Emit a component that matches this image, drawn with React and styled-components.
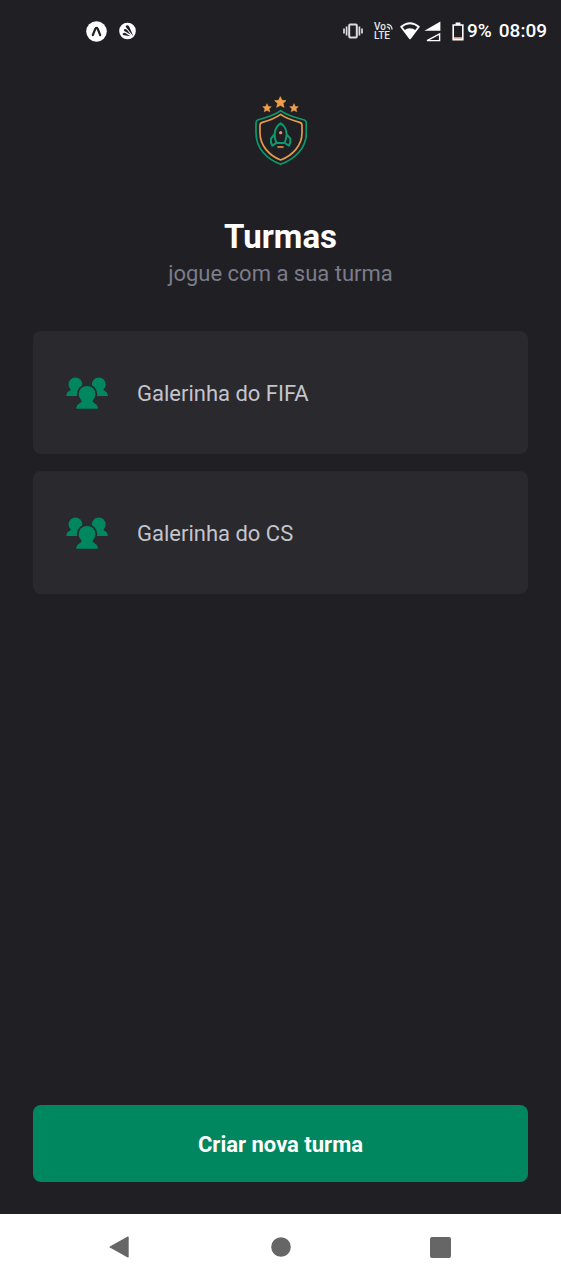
import React from "react";
import styled, { createGlobalStyle, ThemeProvider } from "styled-components";

const theme = {
  background: "#202024",
  card: "#29292e",
  green: "#00875f",
  greenLight: "#0a9b6c",
  orange: "#e59a4c",
  white: "#ffffff",
  text: "#c4c4cc",
  muted: "#7c7c8a",
  nav: "#666666",
};

const GlobalStyle = createGlobalStyle`
  *, *::before, *::after { box-sizing: border-box; }
  body { margin: 0; background: ${theme.background}; }
  button { font: inherit; border: 0; cursor: pointer; }
  svg { display: block; flex: none; }
`;

const Screen = styled.div`
  display: flex;
  flex-direction: column;
  min-height: 100vh;
  background: ${(p) => p.theme.background};
  color: ${(p) => p.theme.white};
  font-family: Roboto, "Liberation Sans", sans-serif;
`;

const StatusBar = styled.header`
  display: flex;
  align-items: center;
  justify-content: space-between;
  height: 62px;
  padding: 0 14px 0 86px;
`;

const StatusGroup = styled.div`
  display: flex;
  align-items: center;
  gap: ${(p) => p.$gap}px;
`;

const StatusText = styled.span`
  font-size: 19px;
  font-weight: 500;
  line-height: 24px;
  white-space: nowrap;
`;

const Content = styled.main`
  display: flex;
  flex: 1;
  flex-direction: column;
  padding: 34px 33px 32px;
`;

const LogoBox = styled.div`
  display: flex;
  justify-content: center;
  margin-bottom: 51px;
`;

const Heading = styled.div`
  text-align: center;
  margin-bottom: 40px;
`;

const Title = styled.h1`
  margin: 0;
  font-size: 33px;
  font-weight: 700;
  line-height: 40px;
`;

const Subtitle = styled.p`
  margin: 0;
  color: ${(p) => p.theme.muted};
  font-size: 22px;
  line-height: 34px;
`;

const GroupList = styled.ul`
  display: flex;
  flex: 1;
  flex-direction: column;
  gap: 17px;
  margin: 0;
  padding: 0 0 32px;
  list-style: none;
`;

const GroupCard = styled.button`
  display: flex;
  align-items: center;
  gap: 28px;
  width: 100%;
  min-height: 123px;
  padding: 34px 33px 32px;
  border-radius: 8px;
  background: ${(p) => p.theme.card};
  color: ${(p) => p.theme.text};
  text-align: left;
`;

const GroupName = styled.span`
  font-size: 22px;
  line-height: 28px;
`;

const PrimaryButton = styled.button`
  width: 100%;
  min-height: 77px;
  padding: 2px 16px 0;
  border-radius: 8px;
  background: ${(p) => p.theme.green};
  color: ${(p) => p.theme.white};
  && {
    font-size: 22px;
    font-weight: 700;
  }
`;

const NavBar = styled.nav`
  display: flex;
  align-items: center;
  justify-content: space-between;
  height: 66px;
  padding: 0 18%;
  background: ${(p) => p.theme.white};
`;

const NavButton = styled.button`
  display: flex;
  align-items: center;
  justify-content: center;
  width: 40px;
  height: 48px;
  padding: 0;
  background: none;
  color: ${(p) => p.theme.nav};
`;

const ExpoIcon = () => (
  <svg width="21" height="21" viewBox="0 0 21 21" aria-hidden="true">
    <circle cx="10.5" cy="10.5" r="10.3" fill="#fff" />
    <path d="M6.8 14.2 L9.3 7.8 Q10.5 6 11.7 7.8 L14.2 14.2" fill="none" stroke="#202024" strokeWidth="2.2" strokeLinecap="round" />
  </svg>
);

const FanIcon = () => (
  <svg width="17" height="18" viewBox="0 0 18 18" aria-hidden="true">
    <circle cx="9" cy="9" r="8.8" fill="#fff" />
    <path d="M15.2 14.6 L7 4.4 Q7 2.6 9 2.8 Q10.4 3 11 4.8 Z" fill="#202024" />
    <path d="M12.6 13 L5.2 8.8 Q4.6 7 6.4 6.8 Q7.4 6.8 8.4 7.8 Z" fill="#202024" />
    <path d="M12 14.6 L4.2 13.2 Q3 11.4 5 11 Q6.4 10.8 8 11.8 Z" fill="#202024" />
  </svg>
);

const VibrateIcon = () => (
  <svg width="20" height="16" viewBox="0 0 20 16" fill="none" stroke="#dcdcde" strokeWidth="2" aria-hidden="true">
    <rect x="6.2" y="1.6" width="7.6" height="12.8" rx="1" />
    <path d="M3.6 3.4v9.2M16.4 3.4v9.2M1 5.4v5.2M19 5.4v5.2" strokeWidth="1.7" />
  </svg>
);

const VolteBadge = styled.span`
  display: flex;
  flex-direction: column;
  color: #e6e6e8;
  font-size: 10px;
  font-weight: 500;
  line-height: 9px;
`;

const VolteLine = styled.span`
  display: flex;
  align-items: center;
`;

const WavesIcon = () => (
  <svg width="7" height="8" viewBox="0 0 8 8" fill="none" stroke="#e6e6e8" strokeWidth="1.3" aria-hidden="true">
    <path d="M1 1 Q6.6 1 7 7M1 3.8 Q4 3.8 4.2 7" />
  </svg>
);

const WifiIcon = () => (
  <svg width="20" height="18" viewBox="0 0 20 18" aria-hidden="true">
    <path d="M1.2 4.8 Q10 -2.4 18.8 4.8 L10 16.4 Z" fill="none" stroke="#fff" strokeWidth="1.8" strokeLinejoin="round" />
    <path d="M4 8.4 Q10 4.2 16 8.4 L10 16.6 Z" fill="#fff" />
  </svg>
);

const SignalIcon = () => (
  <svg width="17" height="21" viewBox="0 0 17 21" aria-hidden="true">
    <path d="M16.4 0.4 V9.8 H0.4 Z" fill="#fff" />
    <path d="M15.6 12.8 V19.6 H3 Z" fill="none" stroke="#fff" strokeWidth="1.4" />
  </svg>
);

const BatteryIcon = () => (
  <svg width="12" height="19" viewBox="0 0 12 19" aria-hidden="true">
    <path d="M3.6 0.4 H8.4 V2.2 H11.6 V18.4 H0.4 V2.2 H3.6 Z" fill="#fff" />
    <path d="M2 3.8 H10 V15.6 H2 Z" fill="#202024" />
    <path d="M2 15 H10 V16.6 H2 Z" fill="#e08a72" />
  </svg>
);

const STAR = "M0 -17 L5 -6 L17 -5 L8 3 L11 15 L0 9 L-11 15 L-8 3 L-17 -5 L-5 -6 Z";

const Logo = () => (
  <svg width="52" height="70" viewBox="30 17 156 210" role="img" aria-label="Escudo com foguete e três estrelas">
    <g fill="#f0a04a" stroke="#f0a04a" strokeWidth="2" strokeLinejoin="round">
      <path d={STAR} transform="translate(106 36)" />
      <path d={STAR} transform="translate(66 53) scale(.76)" />
      <path d={STAR} transform="translate(147 53) scale(.76)" />
    </g>
    <g fill="none" strokeLinejoin="round" strokeLinecap="round">
      <path d="M107 61 C91 74 64 82 38 89 Q33 91 33 98 V128 C33 174 66 207 107 222 C148 207 184 174 184 128 V98 Q184 91 178 89 C151 82 123 74 107 61 Z" stroke={theme.greenLight} strokeWidth="5" />
      <path d="M107 72 C90 84 71 91 52 96 Q45 98 45 105 V128 C45 166 73 196 107 209 C142 196 171 166 171 128 V105 Q171 98 164 96 C145 91 123 84 107 72 Z" stroke={theme.orange} strokeWidth="5" />
      <path d="M94 158 C84 131 90 109 107 99 C124 109 129 131 119 158 Z M88 132 L78 145 Q76 157 82 166 L94 158 M125 132 L136 145 Q138 157 132 166 L119 158" stroke={theme.greenLight} strokeWidth="6" />
      <path d="M99 170 H114" stroke={theme.orange} strokeWidth="5" />
    </g>
    <circle cx="107" cy="127" r="5" fill="#ef8b62" />
  </svg>
);

const GroupIcon = () => (
  <svg width="43" height="34" viewBox="0 0 43 34" fill={theme.green} aria-hidden="true">
    <circle cx="9.4" cy="7.4" r="6.9" />
    <path d="M4 10 Q6 12.6 4 13.6 Q0.8 15 0.2 18.2 Q0.2 19 1 19 H16 V10 Z" />
    <circle cx="32.8" cy="7.4" r="6.9" />
    <path d="M38.2 10 Q36.2 12.6 38.2 13.6 Q41.4 15 42 18.2 Q42 19 41.2 19 H26 V10 Z" />
    <circle cx="21.1" cy="17.3" r="10.2" fill={theme.card} />
    <circle cx="21.1" cy="17.3" r="8.4" />
    <path d="M15 21 Q16.8 24.4 14.6 25.4 Q11 27.2 10.2 30.8 Q10 31.8 11 31.8 H31.2 Q32.2 31.8 32 30.8 Q31.2 27.2 27.6 25.4 Q25.4 24.4 27.2 21 Z" />
  </svg>
);

const BackIcon = () => (
  <svg width="24" height="22" viewBox="0 0 24 22" aria-hidden="true">
    <path d="M19 1.2 V20.8 L1.2 11 Z" fill="currentColor" stroke="currentColor" strokeWidth="1.4" strokeLinejoin="round" />
  </svg>
);

const HomeIcon = () => (
  <svg width="20" height="20" viewBox="0 0 20 20" aria-hidden="true">
    <circle cx="10" cy="10" r="9.8" fill="currentColor" />
  </svg>
);

const RecentsIcon = () => (
  <svg width="21" height="21" viewBox="0 0 21 21" aria-hidden="true">
    <rect width="21" height="21" rx="2" fill="currentColor" />
  </svg>
);

const groups = ["Galerinha do FIFA", "Galerinha do CS"];

export default function App() {
  return (
    <ThemeProvider theme={theme}>
      <GlobalStyle />
      <Screen>
        <StatusBar>
          <StatusGroup $gap={12}>
            <ExpoIcon />
            <FanIcon />
          </StatusGroup>
          <StatusGroup $gap={11}>
            <VibrateIcon />
            <StatusGroup $gap={7}>
              <VolteBadge>
                <VolteLine>Vo<WavesIcon /></VolteLine>
                <span>LTE</span>
              </VolteBadge>
              <StatusGroup $gap={4}>
                <WifiIcon />
                <SignalIcon />
              </StatusGroup>
            </StatusGroup>
            <StatusGroup $gap={7}>
              <StatusGroup $gap={3}>
                <BatteryIcon />
                <StatusText>9%</StatusText>
              </StatusGroup>
              <StatusText as="time">08:09</StatusText>
            </StatusGroup>
          </StatusGroup>
        </StatusBar>

        <Content>
          <LogoBox>
            <Logo />
          </LogoBox>
          <Heading>
            <Title>Turmas</Title>
            <Subtitle>jogue com a sua turma</Subtitle>
          </Heading>
          <GroupList>
            {groups.map((name) => (
              <li key={name}>
                <GroupCard type="button">
                  <GroupIcon />
                  <GroupName>{name}</GroupName>
                </GroupCard>
              </li>
            ))}
          </GroupList>
          <PrimaryButton type="button">Criar nova turma</PrimaryButton>
        </Content>

        <NavBar aria-label="Sistema">
          <NavButton type="button" aria-label="Voltar"><BackIcon /></NavButton>
          <NavButton type="button" aria-label="Início"><HomeIcon /></NavButton>
          <NavButton type="button" aria-label="Recentes"><RecentsIcon /></NavButton>
        </NavBar>
      </Screen>
    </ThemeProvider>
  );
}
